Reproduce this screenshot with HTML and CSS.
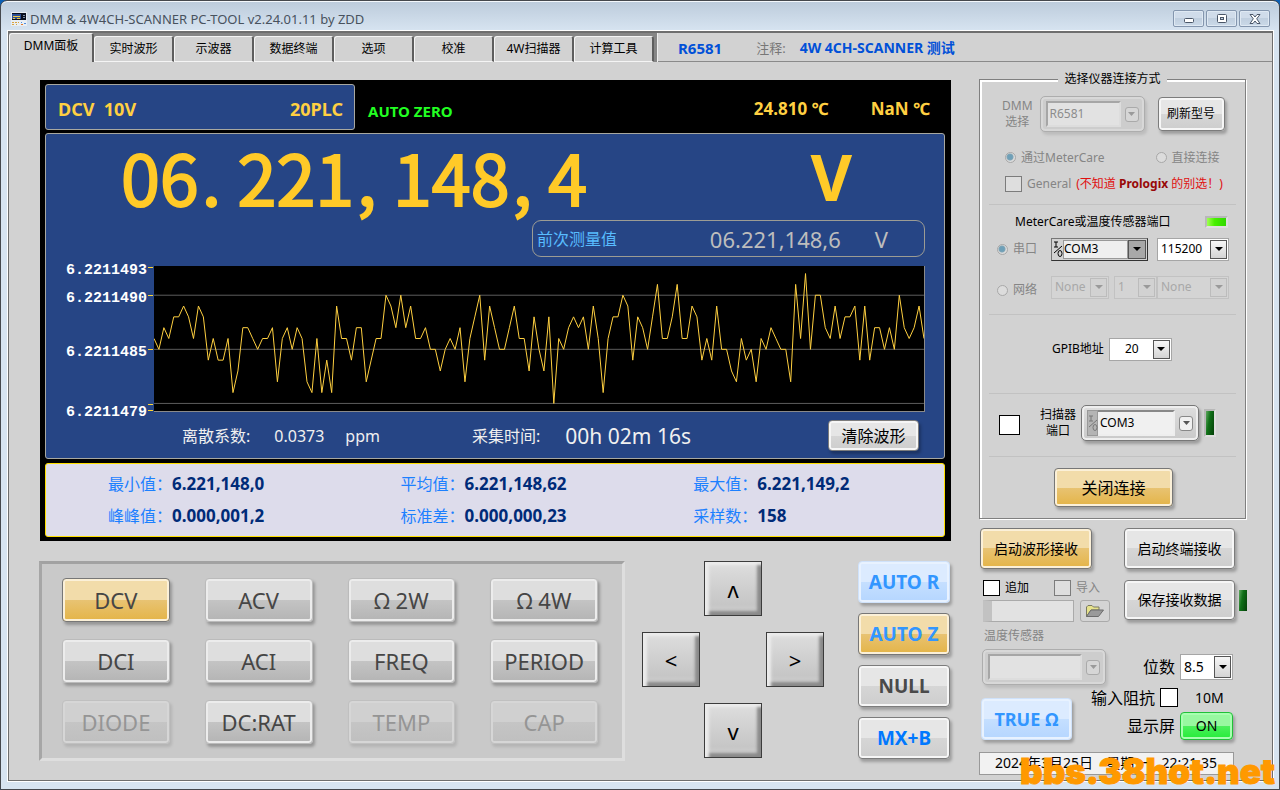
FILE: index.html
```html
<!DOCTYPE html>
<html lang="zh-CN">
<head>
<meta charset="utf-8">
<title>DMM &amp; 4W4CH-SCANNER PC-TOOL</title>
<link rel="stylesheet" href="styles.css">
</head>
<body>
<div class="window">
  <header class="titlebar">
    <svg class="app-icon" width="16" height="14" viewBox="0 0 16 14" shape-rendering="crispEdges">
      <rect x="0" y="0" width="16" height="14" fill="#e8eef4"/>
      <rect x="1" y="1" width="14" height="7" fill="#0a1020"/>
      <rect x="1" y="2" width="9" height="5" fill="#2c4f94"/>
      <path d="M2 4h7M2 6h2M6 6h3" stroke="#f3c941"/>
      <path d="M12 3h2M12 5h2" stroke="#8090a8"/>
      <path d="M1 10h2M4 10h2M7 10h1M1 12h2M5 12h1" stroke="#d9a441"/>
      <path d="M10 10h1M13 11h2" stroke="#4f8fe0"/>
      <path d="M10 12h2" stroke="#e07a30"/>
    </svg>
    <h1 class="title">DMM &amp; 4W4CH-SCANNER PC-TOOL v2.24.01.11 by ZDD</h1>
    <div class="caption">
      <button class="cap-btn" aria-label="最小化"><svg width="12" height="10" viewBox="0 0 12 10"><rect x="1.500" y="4.500" width="9" height="4" rx="1" fill="#fff" stroke="#4a5668"/></svg></button>
      <button class="cap-btn" aria-label="最大化"><svg width="12" height="10" viewBox="0 0 12 10"><rect x="1.500" y=".5" width="9" height="8" rx="1" fill="#fff" stroke="#4a5668"/><rect x="4.500" y="3.500" width="3" height="2" fill="#c4d2e2" stroke="#4a5668"/></svg></button>
      <button class="cap-btn" aria-label="关闭"><svg width="12" height="10" viewBox="0 0 12 10"><path d="M1 .5h3l2 2.500 2-2.500h3L7.700 4.800 11 9.500H8L6 7 4 9.500H1L4.300 4.800z" fill="#fff" stroke="#4a5668"/></svg></button>
    </div>
  </header>

  <div class="client">
    <div class="tabstrip">
      <div class="tabs" role="tablist">
        <button class="tab active" role="tab" aria-selected="true">DMM面板</button>
        <button class="tab" role="tab">实时波形</button>
        <button class="tab" role="tab">示波器</button>
        <button class="tab" role="tab">数据终端</button>
        <button class="tab" role="tab">选项</button>
        <button class="tab" role="tab">校准</button>
        <button class="tab" role="tab">4W扫描器</button>
        <button class="tab" role="tab">计算工具</button>
      </div>
      <div class="note">
        <b class="model">R6581</b>
        <span class="note-label">注释:</span>
        <b class="note-text">4W 4CH-SCANNER 测试</b>
      </div>
    </div>

    <main class="panel">
      <section class="left">
        <div class="display">
          <div class="status">
            <div class="range"><span>DCV&nbsp; 10V</span><span>20PLC</span></div>
            <span class="auto-zero">AUTO ZERO</span>
            <span class="temp">24.810 ℃</span>
            <span class="temp temp2">NaN ℃</span>
          </div>

          <div class="screen">
            <div class="reading">
              <div class="digits">06<span class="sep">.</span>221<span class="sep">,</span>148<span class="sep">,</span>4</div>
              <div class="unit">V</div>
            </div>
            <div class="previous">
              <span class="prev-label">前次测量值</span>
              <span class="prev-value">06.221,148,6</span>
              <span class="prev-unit">V</span>
            </div>
            <div class="chart">
              <div class="axis">
                <span>6.2211493</span>
                <span class="tick-490">6.2211490</span>
                <span class="tick-485">6.2211485</span>
                <span class="tick-479">6.2211479</span>
              </div>
              <svg class="ticks" width="7" height="146" viewBox="0 0 7 146" shape-rendering="crispEdges">
                <path d="M1 1.500h5M1 29.500h5M1 83.500h5M1 138.500h5M1 144.500h5" stroke="#ffd633"/>
              </svg>
              <svg class="plot" viewBox="0 -2.700 156 13.400" preserveAspectRatio="none" shape-rendering="crispEdges">
                <path class="grid" d="M0 0H156M0 5H156M0 10H156"/>
                <polyline class="trace" points="0,4 1,5 2,3 3,4 4,2 5,2 6,1 7,2 8,4 9,1 10,2 11,6 12,4 13,6 14,6 15,4 16,9 17,7 18,3 19,3 20,4 21,5 22,4 23,4 24,3 25,8 26,4 27,3 28,5 29,3 30,4 31,8 32,9 33,4 34,9 35,6 36,9 37,1 38,4 39,4 40,6 41,3 42,3 43,8 44,6 45,4 46,4 47,0 48,1 49,3 50,0 51,3 52,1 53,4 54,4 55,3 56,5 57,5 58,7 59,5 60,4 61,5 62,3 63,8 64,4 65,2 66,0 67,6 68,1 69,3 70,5 71,5 72,3 73,1 74,4 75,4 76,7 77,2 78,5 79,7 80,2 81,10 82,4 83,5 84,3 85,2 86,3 87,2 88,5 89,1 90,4 91,9 92,4 93,2 94,2 95,0 96,1 97,6 98,2 99,3 100,5 101,2 102,-1 103,4 104,4 105,2 106,-1 107,4 108,4 109,1 110,2 111,6 112,4 113,6 114,1 115,5 116,5 117,7 118,8 119,4 120,6 121,5 122,8 123,4 124,5 125,3 126,4 127,5 128,5 129,8 130,-1 131,4 132,-2 133,5 134,0 135,0 136,3 137,4 138,1 139,4 140,2 141,2 142,1 143,6 144,1 145,6 146,3 147,3 148,5 149,3 150,5 151,0 152,3 153,4 154,3 155,1 156,4"/>
              </svg>
            </div>
            <div class="screen-foot">
              <span class="foot-label cv-label">离散系数:</span>
              <span class="cv-value">0.0373</span>
              <span class="cv-unit">ppm</span>
              <span class="foot-label time-label">采集时间:</span>
              <span class="time-value">00h 02m 16s</span>
              <button class="gloss clear">清除波形</button>
            </div>
          </div>

          <dl class="stats">
            <div><dt>最小值：</dt><dd>6.221,148,0</dd></div>
            <div><dt>平均值：</dt><dd>6.221,148,62</dd></div>
            <div><dt>最大值：</dt><dd>6.221,149,2</dd></div>
            <div><dt>峰峰值：</dt><dd>0.000,001,2</dd></div>
            <div><dt>标准差：</dt><dd>0.000,000,23</dd></div>
            <div><dt>采样数：</dt><dd>158</dd></div>
          </dl>
        </div>

        <div class="controls">
          <div class="keypad">
            <button class="gloss key gold">DCV</button>
            <button class="gloss key">ACV</button>
            <button class="gloss key">Ω 2W</button>
            <button class="gloss key">Ω 4W</button>
            <button class="gloss key">DCI</button>
            <button class="gloss key">ACI</button>
            <button class="gloss key">FREQ</button>
            <button class="gloss key">PERIOD</button>
            <button class="gloss key" disabled>DIODE</button>
            <button class="gloss key">DC:RAT</button>
            <button class="gloss key" disabled>TEMP</button>
            <button class="gloss key" disabled>CAP</button>
          </div>
          <div class="dpad">
            <button class="arrow up">ʌ</button>
            <button class="arrow lt">&lt;</button>
            <button class="arrow gt">&gt;</button>
            <button class="arrow down">v</button>
          </div>
          <div class="modes">
            <button class="gloss mode blue">AUTO R</button>
            <button class="gloss mode gold sky">AUTO Z</button>
            <button class="gloss mode">NULL</button>
            <button class="gloss mode azure">MX+B</button>
          </div>
        </div>
      </section>

      <aside class="right">
        <fieldset class="connection">
          <legend>选择仪器连接方式</legend>
          <div class="row row-model">
            <label class="stack dim" for="model">DMM<br>选择</label>
            <span class="framed off model-box">
              <select id="model" disabled><option>R6581</option></select>
              <span class="chip"><svg width="7" height="4" viewBox="0 0 7 4"><path d="M0 0h7L3.500 4z"/></svg></span>
            </span>
            <button class="gloss refresh">刷新型号</button>
          </div>
          <div class="row row-via">
            <label class="dim"><input class="radio" type="radio" name="via" checked disabled>通过MeterCare</label>
            <label class="dim"><input class="radio" type="radio" name="via" disabled>直接连接</label>
          </div>
          <div class="row row-general">
            <label class="dim"><input class="check" type="checkbox" disabled>General</label>
            <span class="warn">(不知道 <b>Prologix</b> 的别选！)</span>
          </div>
          <hr>
          <div class="row row-port-title">
            <span>MeterCare或温度传感器端口</span>
            <span class="led led-on"></span>
          </div>
          <div class="row row-serial">
            <label class="dim"><input class="radio" type="radio" name="port" checked disabled>串口</label>
            <span class="visa">
              <svg class="io" width="10" height="18" viewBox="0 0 10 18"><path d="M1 2h4M3 2v5M1 7h4M1 13 9 6" stroke="currentColor" fill="none"/><ellipse cx="7" cy="13.500" rx="2" ry="3" stroke="currentColor" fill="none"/></svg>
              <select aria-label="串口端口"><option>COM3</option></select>
              <span class="drop"><svg width="8" height="4" viewBox="0 0 8 4"><path d="M0 0h8L4 4z"/></svg></span>
            </span>
            <span class="combo baud">
              <select aria-label="波特率"><option>115200</option></select>
              <span class="drop"><svg width="8" height="4" viewBox="0 0 8 4"><path d="M0 0h8L4 4z"/></svg></span>
            </span>
          </div>
          <div class="row row-net">
            <label class="dim"><input class="radio" type="radio" name="port" disabled>网络</label>
            <span class="combo off net-a">
              <select aria-label="网络接口" disabled><option>None</option></select>
              <span class="drop"><svg width="8" height="4" viewBox="0 0 8 4"><path d="M0 0h8L4 4z"/></svg></span>
            </span>
            <span class="combo off net-b">
              <select aria-label="网络通道" disabled><option>1</option></select>
              <span class="drop"><svg width="8" height="4" viewBox="0 0 8 4"><path d="M0 0h8L4 4z"/></svg></span>
            </span>
            <span class="combo off net-c">
              <select aria-label="网络设备" disabled><option>None</option></select>
              <span class="drop"><svg width="8" height="4" viewBox="0 0 8 4"><path d="M0 0h8L4 4z"/></svg></span>
            </span>
          </div>
          <hr>
          <div class="row row-gpib">
            <label for="gpib">GPIB地址</label>
            <span class="combo gpib">
              <select id="gpib"><option>20</option></select>
              <span class="drop"><svg width="8" height="4" viewBox="0 0 8 4"><path d="M0 0h8L4 4z"/></svg></span>
            </span>
          </div>
          <hr>
          <div class="row row-scanner">
            <input class="check big" type="checkbox" aria-label="启用扫描器">
            <label class="stack" for="scanner">扫描器<br>端口</label>
            <span class="framed scanner-box">
              <span class="io-cell"><svg class="io" width="10" height="18" viewBox="0 0 10 18"><path d="M1 2h4M3 2v5M1 7h4M1 13 9 6" stroke="currentColor" fill="none"/><ellipse cx="7" cy="13.500" rx="2" ry="3" stroke="currentColor" fill="none"/></svg></span>
              <select id="scanner"><option>COM3</option></select>
              <span class="chip"><svg width="7" height="4" viewBox="0 0 7 4"><path d="M0 0h7L3.500 4z"/></svg></span>
            </span>
            <span class="led led-off framed-led"></span>
          </div>
          <hr>
          <button class="gloss gold disconnect">关闭连接</button>
        </fieldset>

        <div class="record">
          <button class="gloss gold rec">启动波形接收</button>
          <button class="gloss term">启动终端接收</button>
          <div class="file">
            <div class="file-opts">
              <label><input class="check" type="checkbox">追加</label>
              <label class="dim"><input class="check" type="checkbox" disabled>导入</label>
            </div>
            <div class="file-path">
              <input class="path" type="text" aria-label="文件路径" disabled>
              <button class="folder" aria-label="打开文件" disabled>
                <svg width="20" height="14" viewBox="0 0 20 14"><path d="M1.500 12.500V3L3 1.500h4L8.500 3H14v3H6z" fill="#e6e28c" stroke="#7a7a60"/><path d="M1.500 12.500 6 6h12.500l-5 6.500z" fill="#9a9a9a" stroke="#6c6c6c"/></svg>
              </button>
            </div>
          </div>
          <div class="save-wrap">
            <button class="gloss save">保存接收数据</button>
            <span class="led led-off"></span>
          </div>
        </div>

        <label class="dim sensor-label" for="sensor">温度传感器</label>
        <div class="settings">
          <span class="framed off sensor-box">
            <select id="sensor" disabled><option></option></select>
            <span class="chip"><svg width="7" height="4" viewBox="0 0 7 4"><path d="M0 0h7L3.500 4z"/></svg></span>
          </span>
          <span class="setting">
            <label for="bits">位数</label>
            <span class="combo bits">
              <select id="bits"><option>8.5</option></select>
              <span class="drop"><svg width="8" height="4" viewBox="0 0 8 4"><path d="M0 0h8L4 4z"/></svg></span>
            </span>
          </span>
        </div>
        <div class="settings lower">
          <button class="gloss blue true-ohm">TRUE Ω</button>
          <div class="setting-stack">
            <span class="setting">
              <label for="impedance">输入阻抗</label>
              <input class="check mid" id="impedance" type="checkbox">
              <span class="ohms">10M</span>
            </span>
            <span class="setting">
              <span>显示屏</span>
              <button class="gloss green on">ON</button>
            </span>
          </div>
        </div>
        <div class="clock"><span>2024年3月25日</span><span>星期一</span><span>22:21:35</span></div>
      </aside>
    </main>
  </div>
  <div class="watermark">bbs.38hot.net</div>
</div>
</body>
</html>
```
FILE: styles.css
```css
* { box-sizing: border-box; }

body {
  margin: 0;
  background: #0b5fb5;
  color: #000;
  font: 12px/16px "Noto Sans", "Noto Sans CJK SC", sans-serif;
}

button, select, input { font: inherit; color: inherit; margin: 0; }
button { padding: 0; white-space: nowrap; }
label { white-space: nowrap; }

/* Window frame */
.window {
  position: relative;
  display: flex;
  flex-direction: column;
  min-height: 100vh;
  padding: 0 6px 8px 7px;
  border: 1px solid #45484d;
  border-radius: 7px 7px 0 0;
  background: linear-gradient(#bccbdb, #d7e4f1 30px);
  box-shadow: inset 0 1px #f4f8fc;
}

.titlebar {
  display: flex;
  align-items: center;
  height: 30px;
  padding: 5px 3px 0 3px;
}

.title {
  margin: 0 0 0 3px;
  font: 13px/16px "Noto Sans", sans-serif;
  color: #48525e;
}

.caption { display: flex; gap: 2px; margin-left: auto; }

.cap-btn {
  display: grid;
  place-items: center;
  width: 31px;
  height: 17px;
  border: 1px solid #8496ae;
  border-radius: 2px;
  background: linear-gradient(#d0dcea 50%, #c0cfdf 50%, #cbd9e8);
  box-shadow: inset 0 0 0 1px #dfe9f3;
}

.client {
  flex: 1;
  display: flex;
  flex-direction: column;
  border: 1px solid #6e6e6e;
  border-top-width: 2px;
  background: #d2d2d2;
  box-shadow: 0 0 0 1px #fff;
}

/* Tabs */
.tabstrip { display: flex; height: 29px; background: #868686; }
.tabs { display: flex; align-items: flex-end; }

.tab {
  width: 80px;
  height: 26px;
  border: 0;
  border-top: 1px solid #f4f4f4;
  border-left: 1px solid #f4f4f4;
  border-right: 2px solid #5e5e5e;
  border-bottom: 1px solid #f4f4f4;
  border-radius: 3px 3px 0 0;
  background: #d2d2d2;
}
.tab.active { width: 85px; height: 29px; padding-bottom: 4px; border-bottom: 0; }

.note {
  flex: 1;
  display: flex;
  align-items: center;
  margin-left: 3px;
  padding-left: 20px;
  border-left: 1px solid #eee;
  background: #d2d2d2;
  box-shadow: inset 0 -1px #8a8a8a;
  font-size: 14px;
  color: #0050d8;
}
.model { font-size: 15px; }
.note-label { margin: 0 14px 0 34px; color: #777; font-size: 13px; }

/* Main grid */
.panel {
  flex: 1;
  display: grid;
  grid-template-columns: minmax(0, 1fr) 268px;
  gap: 28px;
  padding: 16px 25px 5px 31px;
}

.display { padding: 4px 6px 4px 5px; margin-top: 2px; background: #000; }

.status { display: flex; align-items: center; height: 46px; margin-bottom: 3px; font-weight: 700; }
.range {
  display: flex;
  justify-content: space-between;
  align-items: center;
  width: 310px;
  height: 46px;
  padding: 4px 11px 0 12px;
  border: 1px solid #a8a8a0;
  border-radius: 3px;
  background: #264585;
}
.range { font-size: 18px; color: #ffd042; }
.auto-zero { margin: 8px auto 0 13px; font-size: 15px; color: #22ff22; }
.temp { margin: 4px 42px 0 0; font-size: 17px; color: #ffd042; }
.temp2 { margin-right: 15px; }

.screen {
  height: 326px;
  border: 1px solid #a8a8a0;
  border-radius: 3px;
  background: #264585;
}
.reading {
  display: flex;
  justify-content: space-between;
  height: 86px;
  padding: 0 92px 0 75px;
  color: #ffca28;
}
.digits { font: 400 70px/84px "Noto Sans CJK SC", sans-serif; -webkit-text-stroke: 2px #ffca28; }
.sep { display: inline-block; width: 1ch; padding-left: 3px; }
.unit { font-weight: 700; font-size: 64px; line-height: 86px; }

.previous {
  display: flex;
  align-items: center;
  width: 393px;
  height: 37px;
  margin: 0 19px 9px auto;
  padding: 0 36px 0 4px;
  border: 1px solid #9c9c94;
  border-radius: 9px;
  color: #bdbdbd;
  font-size: 22px;
}
.prev-label { margin-right: auto; font-size: 16px; color: #58bcff; }
.prev-unit { margin-left: 34px; }

.chart { display: flex; height: 146px; padding-right: 19px; }
.axis {
  display: flex;
  flex-direction: column;
  margin: -5px 0 0 20px;
  color: #fff;
  font: 700 15px/20px "Liberation Mono", monospace;
}
.tick-490 { margin-top: 8px; }
.tick-485 { margin-top: 34px; }
.tick-479 { margin-top: 40px; }
.ticks { flex: none; }
.plot {
  flex: 1;
  min-width: 0;
  height: 146px;
  border-right: 1px solid #8a8a8a;
  border-bottom: 1px solid #8a8a8a;
  background: #000;
}
.grid, .trace { fill: none; stroke-width: 1px; vector-effect: non-scaling-stroke; }
.grid { stroke: #5c5c5c; }
.trace { stroke: #ffd040; }

.screen-foot {
  display: flex;
  align-items: center;
  padding: 8px 25px 0 136px;
  color: #f0f0f0;
  font-size: 16px;
}
.cv-value { margin: 0 21px 0 24px; }
.time-label { margin: 0 25px 0 92px; }
.time-value { font-size: 21px; }
.clear { width: 91px; height: 31px; margin-left: auto; color: #000; }

.stats {
  display: grid;
  grid-template-columns: 7fr 7fr 6fr;
  gap: 8px 0;
  margin: 4px 0 0;
  padding: 8px 0 8px 62px;
  height: 74px;
  border: 1px solid #ffe000;
  border-radius: 3px;
  background: #dddceb;
  font-size: 16px;
  line-height: 24px;
}
.stats div { display: flex; white-space: nowrap; }
.stats dt { color: #1c80ff; }
.stats dd { margin: 0; color: #002b78; font-size: 17px; font-weight: 700; }

/* Buttons */
.gloss {
  border: 1px solid #7c7c7c;
  border-radius: 4px;
  background: linear-gradient(#e6e6e6 50%, #d6d6d6 50%, #cdcdcd);
  box-shadow: inset 0 0 0 2px #f6f6f6, 2px 3px 3px rgba(0, 0, 0, .25);
}
.gold, .key.gold {
  border-color: #777;
  background: linear-gradient(#f2dcaa 50%, #e8c373 50%, #e4b447);
  box-shadow: inset 0 0 0 2px #fbf0d8, 2px 3px 3px rgba(0, 0, 0, .25);
}
.blue {
  border-color: #cfe2fb;
  background: linear-gradient(#dcebff 50%, #c5dfff 50%, #b5d6ff);
  box-shadow: inset 0 0 0 2px #e8f2ff, 2px 3px 3px rgba(0, 0, 0, .25);
}
.green {
  border-color: #20c038;
  background: linear-gradient(#98f8a0 50%, #4cf05c 50%, #24ec38);
  box-shadow: inset 0 0 0 2px #a8ffb0, 2px 3px 3px rgba(0, 0, 0, .25);
}

.controls { display: flex; align-items: flex-start; margin: 20px 1px 0 -1px; }

.keypad {
  flex: 1;
  display: grid;
  grid-template-columns: repeat(4, 1fr);
  gap: 17px 35px;
  padding: 14px 24px 14px 20px;
  border: 3px solid;
  border-color: #a2a2a2 #dedede #dedede #a6a6a6;
  background: #c9c9c9;
}
.key {
  height: 44px;
  border-color: #bbb;
  background: linear-gradient(#dedede 50%, #c4c4c4 50%, #b4b4b4);
  box-shadow: inset 0 0 0 2px #ececec, 2px 3px 3px rgba(0, 0, 0, .25);
  color: #464646;
  font-size: 22px;
}
.key:disabled {
  border-color: #c0c0c0;
  background: linear-gradient(#d0d0d0 50%, #c5c5c5 50%, #bfbfbf);
  box-shadow: inset 0 0 0 2px #d6d6d6, 2px 3px 3px rgba(0, 0, 0, .1);
  color: #959595;
}

.dpad {
  display: grid;
  grid-template: repeat(3, 55px) / repeat(3, 58px);
  gap: 16px 4px;
  margin-left: 17px;
}
.arrow {
  border: 1px solid #3c3c3c;
  background: linear-gradient(#dedede, #c6c6c6 80%, #d0d0d0);
  box-shadow: inset 4px 3px 3px #ececec, inset -4px -4px 3px #8a8a8a;
  font-size: 22px;
}
.up { grid-area: 1 / 2; }
.lt { grid-area: 2 / 1; }
.gt { grid-area: 2 / 3; }
.down { grid-area: 3 / 2; }

.modes { display: grid; grid-template: repeat(4, 42px) / 92px; gap: 10px; margin-left: 34px; }
.mode { color: #4a4a4a; font-size: 19px; font-weight: 700; }
.blue, .sky { color: #3296ff; }
.azure { color: #0078ff; }

/* Connection group */
.connection {
  height: 448px;
  margin: -7px 1px 0 0;
  min-width: 0;
  padding: 0 9px;
  border: 1px solid #808080;
  box-shadow: 1px 1px #fff, inset 2px 2px #fff;
}
.connection legend { margin: 0 auto; padding: 0 6px; background: #d2d2d2; line-height: 16px; }
.connection hr { height: 1px; margin: 0; border: 0; background: #c2c2c2; }

.row { display: flex; align-items: center; white-space: nowrap; }
.row label, .file label { display: flex; align-items: center; }
.dim { color: #858585; }
.row .stack { display: block; text-align: center; }

.row-model { height: 46px; margin-top: 4px; padding-left: 13px; }
.model-box { width: 105px; margin: 0 13px 0 7px; }
.refresh { width: 67px; height: 34px; }
.row-via { height: 38px; padding: 3px 0 0 16px; gap: 51px; }
.row-general { height: 17px; padding-left: 16px; margin-bottom: 12px; gap: 5px; }
.warn { color: #e01010; }
.warn b { color: #980808; }
.row-port-title { height: 32px; padding: 2px 8px 0 26px; justify-content: space-between; }
.row-serial { height: 24px; padding-left: 8px; }
.row-serial label { width: 54px; }
.row-net { height: 24px; margin: 14px 0 15px; padding-left: 8px; }
.row-net label { width: 54px; padding-top: 6px; }
.row-gpib { height: 78px; padding: 0 0 10px 63px; gap: 5px; }
.row-scanner { height: 62px; padding: 0 0 4px 10px; }
.row-scanner .stack { margin: 0 5px 0 20px; }
.disconnect { display: block; width: 119px; height: 39px; margin: 11px auto 0 65px; font-size: 16px; }

.radio {
  appearance: none;
  width: 11px;
  height: 11px;
  margin-right: 5px;
  border: 1px solid #a8a8a8;
  border-radius: 50%;
  background: #dcdcdc;
}
.radio:checked { background: radial-gradient(circle at 4px 4px, #6ea0b8 2px, #7fa4b6 3px, #dcdcdc 4px); }

.check {
  appearance: none;
  width: 17px;
  height: 16px;
  margin-right: 5px;
  border: 1px solid #000;
  background: #fff;
}
.check:disabled { border-color: #7c7c7c; background: #dedede; }
.check.big { width: 21px; height: 20px; margin: 4px 0 0; }
.check.mid { width: 18px; height: 19px; margin: 0; }

select {
  appearance: none;
  flex: 1;
  min-width: 0;
  height: 100%;
  padding: 0 2px;
  border: 0;
  border-radius: 0;
  background: none;
  opacity: 1;
}
.drop, .chip { display: grid; place-items: center; flex: none; }

.combo {
  display: flex;
  height: 23px;
  padding: 1px;
  border: 1px solid #a6a6a6;
  background: #fff;
}
.combo .drop { width: 17px; border: 1px solid #555; background: linear-gradient(#f6f6f6, #d4d4d4); }
.combo.off { border-color: #c2c2c2; background: #d4d4d4; color: #a8a8a8; }
.combo.off .drop { border-color: #bcbcbc; background: #d2d2d2; }
.off svg { fill: #9a9a9a; }
.baud { width: 72px; margin-left: 9px; }
.net-a { width: 58px; margin-right: 5px; }
.net-b { width: 43px; }
.net-c { width: 72px; }
.gpib { width: 63px; }
.gpib select { padding-left: 14px; }

.visa {
  display: flex;
  width: 97px;
  height: 23px;
  padding: 1px;
  border: 1px solid;
  border-color: #777 #333 #333 #777;
  background: #d2d2d2;
}
.visa select { padding: 0; border: 1px solid #999; background: #efefef; }
.visa .drop { width: 18px; border: 1px solid #555; background: #a8a8a8; }

.framed {
  display: flex;
  align-items: center;
  height: 36px;
  padding: 4px 5px;
  border: 1px solid #777;
  border-radius: 5px;
  background: linear-gradient(#dedede, #c9c9c9);
  box-shadow: inset 0 0 0 2px #eee, 2px 3px 3px rgba(0, 0, 0, .25);
}
.framed select { height: 26px; border: 2px solid; border-color: #888 #eee #eee #888; background: #f0f0f0; }
.chip {
  width: 14px;
  height: 15px;
  margin-left: 4px;
  border: 1px solid #888;
  border-radius: 3px;
  background: #f0f0f0;
  fill: #555;
}
.framed.off { border-color: #adadad; color: #8c8c8c; background: #cdcdcd; box-shadow: inset 0 0 0 2px #d8d8d8, 2px 3px 3px rgba(0, 0, 0, .1); }
.framed.off select { border-color: #a6a6a6 #ddd #ddd #a6a6a6; background: #e2e2e2; }
.framed.off .chip { border-color: #aaa; background: #d6d6d6; }
.framed:not(.off) select { border-left: 0; }
.scanner-box { width: 118px; }
.io-cell { display: grid; place-items: center; width: 11px; height: 26px; border: 1px solid #999; background: #b4b4b4; color: #777; }

.led { flex: none; }
.led-on {
  width: 23px;
  height: 12px;
  border: 2px solid;
  border-color: #b8b8b8 #dedede #dedede #b8b8b8;
  background: linear-gradient(90deg, #a0ff50, #48f000 40%, #30d800);
}
.led-off { width: 8px; height: 21px; background: linear-gradient(100deg, #60a860, #107018 40%, #044008); }
.framed-led { box-sizing: content-box; height: 24px; margin-left: 5px; border: 2px solid; border-color: #b8b8b8 #dedede #dedede #b8b8b8; }

/* Recording controls */
.record {
  display: grid;
  grid-template-columns: 130px 111px;
  column-gap: 14px;
  row-gap: 11px;
  align-items: start;
  margin: 9px 0 0 1px;
  font-size: 14px;
}
.rec { width: 112px; height: 41px; }
.term { height: 41px; }
.save-wrap { display: flex; align-items: center; gap: 4px; }
.save { flex: none; width: 111px; height: 40px; }
.file { padding-left: 3px; font-size: 12px; }
.file-opts { display: flex; gap: 25px; }
.file-path { display: flex; justify-content: space-between; margin-top: 4px; }
.path {
  width: 91px;
  height: 22px;
  border: 1px solid #aaa;
  border-left: 9px solid #c2c2c2;
  background: #e2e2e2;
}
.folder {
  display: grid;
  place-items: center;
  width: 30px;
  height: 22px;
  border: 1px solid #aaa;
  border-radius: 3px;
  background: #d4d4d4;
}

.sensor-label { display: block; margin: 6px 0 5px 5px; }
.settings {
  display: flex;
  justify-content: space-between;
  align-items: center;
  padding: 0 14px 0 3px;
  font-size: 16px;
}
.setting { display: flex; justify-content: flex-end; align-items: center; gap: 5px; }
.sensor-box { width: 124px; }
.combo.bits { width: 53px; height: 26px; font-size: 14px; }
.lower { align-items: flex-end; margin-top: 3px; padding-left: 2px; }
.true-ohm { width: 91px; height: 42px; font-size: 18px; font-weight: 700; }
.setting-stack { display: grid; gap: 5px; }
.ohms { width: 50px; padding-left: 12px; font-size: 14px; }
.on { width: 53px; height: 28px; font-size: 14px; }

.clock {
  display: flex;
  justify-content: space-between;
  width: 255px;
  height: 23px;
  margin-top: 12px;
  padding: 0 16px 0 15px;
  border: 1px solid #999;
  background: #f2f2f2;
  font-size: 14px;
  line-height: 20px;
}

.watermark {
  position: absolute;
  right: 4px;
  bottom: 0;
  color: #ff9900;
  font: 900 35px/36px "Inter", sans-serif;
  -webkit-text-stroke: 1px #ff9900;
}
```
